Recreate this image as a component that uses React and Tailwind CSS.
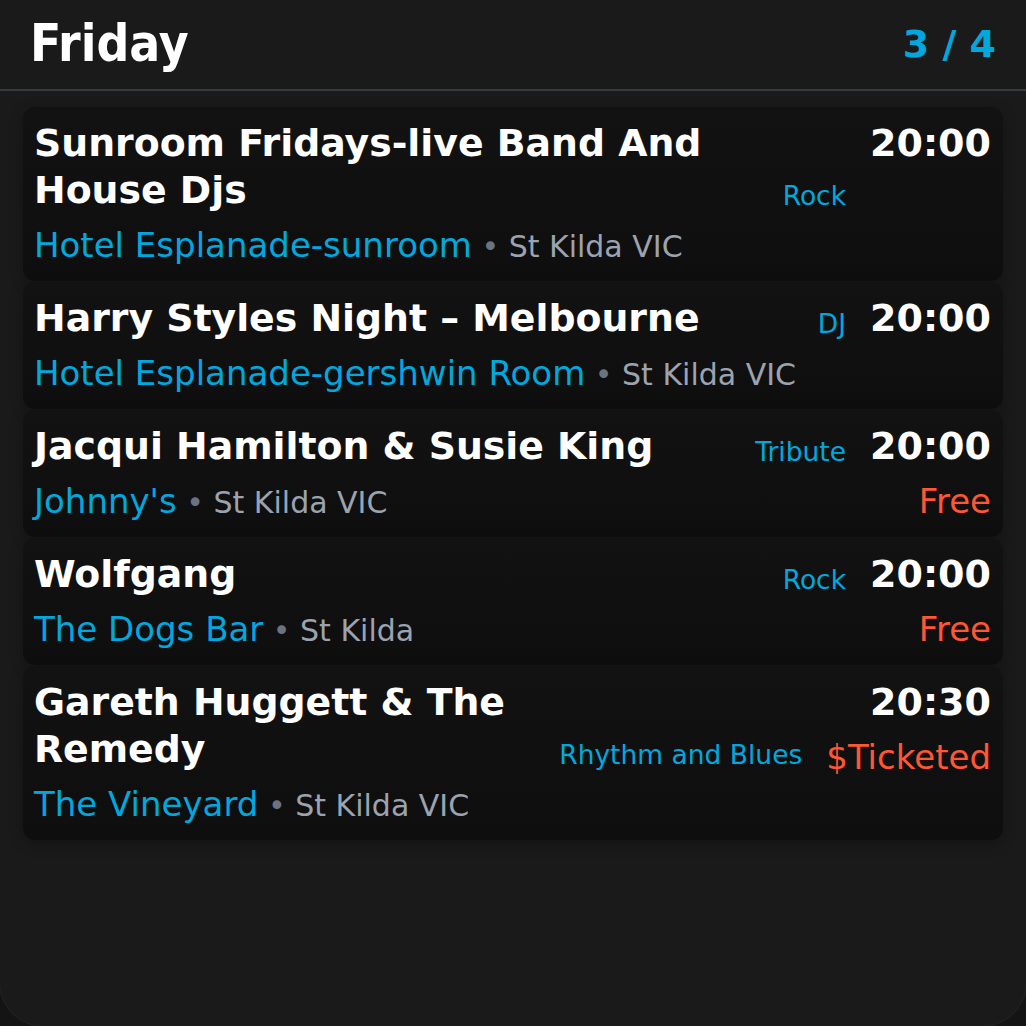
import React from 'react';

const EVENTS = [
  { title: 'Sunroom Fridays-live Band And House Djs', venue: 'Hotel Esplanade-sunroom', suburb: 'St Kilda VIC', genre: 'Rock', time: '20:00' },
  { title: 'Harry Styles Night – Melbourne', venue: 'Hotel Esplanade-gershwin Room', suburb: 'St Kilda VIC', genre: 'DJ', time: '20:00' },
  { title: 'Jacqui Hamilton & Susie King', venue: "Johnny's", suburb: 'St Kilda VIC', genre: 'Tribute', time: '20:00', price: 'Free' },
  { title: 'Wolfgang', venue: 'The Dogs Bar', suburb: 'St Kilda', genre: 'Rock', time: '20:00', price: 'Free' },
  { title: 'Gareth Huggett & The Remedy', venue: 'The Vineyard', suburb: 'St Kilda VIC', genre: 'Rhythm and Blues', time: '20:30', price: '$Ticketed' },
];

function EventCard({ ev }) {
  return (
    <div className="flex gap-6 rounded-xl bg-gradient-to-b from-[#121212] to-[#0e0e0e] pl-[11px] pr-3 pt-[13px] pb-[13px] shadow-[0_4px_14px_rgba(0,0,0,0.25)]">
      {/* left: title + genre, venue */}
      <div className="flex-1 min-w-0">
        <div className="flex items-end gap-6">
          <div className="flex-1 text-[37.8px] font-bold leading-[47px] text-white">{ev.title}</div>
          <div className="shrink-0 text-[26.5px] leading-[36px] text-[#00a8de]">{ev.genre}</div>
        </div>
        <div className="mt-[8px] text-[34px] leading-[46px] whitespace-nowrap">
          <span className="leading-none text-[#00a8de]">{ev.venue}</span>
          <span className="text-[30px] leading-none text-[#6b7280]"> • </span>
          <span className="text-[30px] leading-none text-[#9ca3af]">{ev.suburb}</span>
        </div>
      </div>
      {/* right: time, price */}
      <div className="shrink-0 text-right">
        <div className="text-[38px] font-bold leading-[47px] text-white">{ev.time}</div>
        {ev.price && (
          <div className="mt-[8px] text-[34px] leading-[46px] text-[#ff5733]">{ev.price}</div>
        )}
      </div>
    </div>
  );
}

export default function App() {
  return (
    <div className="h-[1026px] w-[1026px] bg-[#141414]" style={{ fontFamily: '"DejaVu Sans", sans-serif' }}>
      <div className="h-full rounded-b-[44px] bg-[#1a1a1a] ring-1 ring-[#222]">
        {/* header */}
        <div className="flex items-center justify-between border-b-2 border-[#353a44] px-[30px] h-[91px]">
          <h1 className="text-[51px] font-bold text-white" style={{ fontFamily: '"DejaVu Sans Condensed", "DejaVu Sans", sans-serif' }}>Friday</h1>
          <span className="text-[38px] font-bold text-[#00a8de]">3 / 4</span>
        </div>
        {/* list */}
        <div className="flex flex-col gap-px px-[23px] pt-[16px]">
          {EVENTS.map((ev) => (
            <EventCard key={ev.title} ev={ev} />
          ))}
        </div>
      </div>
    </div>
  );
}
